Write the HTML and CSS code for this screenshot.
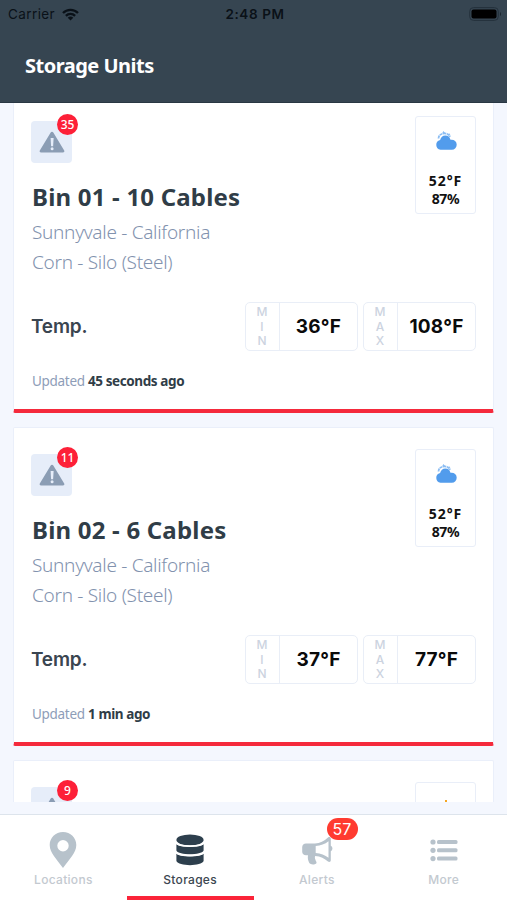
FILE: index.html
```
<!doctype html>
<html lang="en">
<head>
	<meta charset="utf-8">
	<meta name="viewport" content="width=device-width, initial-scale=1.0">
	<title>Storage Units</title>
	<link rel="stylesheet" href="styles.css">
</head>

<body>
	<svg class="sprite" width="0" height="0">
		<symbol id="warning" viewBox="0 0 26 22">
			<path fill="#8b9db4" d="M13 .8c.6 0 1 .3 1.300.8l10.900 18c.6 1-.1 1.900-1.200 1.900H2c-1.100 0-1.800-.9-1.200-1.900l10.900-18c.3-.5.7-.8 1.300-.8z"/>
			<path fill="#e6edf9" d="M11.600 7h3l-.5 8.200h-2z"/>
			<circle fill="#e6edf9" cx="13.100" cy="17.700" r="1.500"/>
		</symbol>
		<symbol id="cloud" viewBox="0 0 22 20">
			<path fill="none" stroke="#8bbdf3" stroke-width="1.800" stroke-dasharray="3 .6" d="M3.500 7.500C3.700 4.500 5.500 3 8.500 2.500s5 .8 6.500 3.500"/>
			<path fill="#8bbdf3" d="M8.300 0l1.800 2-3 .6zM14 2l1.700 2.500-2.500-.2z"/>
			<path fill="#529cec" d="M5.500 18.800a5 5 0 0 1-.4-9.800c.7-2.700 2.500-4.500 5.200-4.500s4.500 1.600 5.200 4.200h1a5 5 0 0 1 .3 10.100z"/>
		</symbol>
	</svg>

	<div class="phone">
		<div class="header">
			<div class="statusbar">
				<div class="carrier">Carrier
					<svg width="17" height="13" viewBox="0 0 17 13">
						<g fill="none" stroke="#0a1118" stroke-width="2.300">
							<path d="M1 5C5 .7 12 .7 16 5"/>
							<path d="M3.900 7.900C6.500 5.200 10.500 5.200 13.100 7.900"/>
						</g>
						<path fill="#0a1118" d="M5.700 9.700c1.600-1.500 4-1.500 5.600 0L8.500 12.500z"/>
					</svg>
				</div>
				<div class="clock">2:48 PM</div>
				<div class="battery">
					<svg width="33" height="14" viewBox="0 0 33 14">
						<rect x=".7" y=".6" width="28.600" height="12.800" rx="3.800" fill="none" stroke="#24313c"/>
						<rect x="2.500" y="2.500" width="25" height="9" rx="2" fill="#000"/>
						<path fill="#1a242d" d="M31 5c1.300.8 1.300 3.200 0 4z"/>
					</svg>
				</div>
			</div>
			<h1>Storage Units</h1>
		</div>

		<div class="content">
			<div class="card">
				<div class="card-top">
					<div class="alert">
						<svg width="26" height="22"><use href="#warning"/></svg>
						<span class="count">35</span>
					</div>
					<div class="weather">
						<svg width="22" height="20"><use href="#cloud"/></svg>
						<p class="degrees">52°F</p>
						<p>87%</p>
					</div>
				</div>
				<h2>Bin 01 - 10 Cables</h2>
				<p class="info place">Sunnyvale - California</p>
				<p class="info">Corn - Silo (Steel)</p>
				<div class="temp">
					<h3>Temp.</h3>
					<div class="range">
						<div class="label"><span>M</span><span>I</span><span>N</span></div>
						<div class="value">36°F</div>
					</div>
					<div class="range">
						<div class="label"><span>M</span><span>A</span><span>X</span></div>
						<div class="value">108°F</div>
					</div>
				</div>
				<p class="updated">Updated <b>45 seconds ago</b></p>
			</div>

			<div class="card">
				<div class="card-top">
					<div class="alert">
						<svg width="26" height="22"><use href="#warning"/></svg>
						<span class="count">11</span>
					</div>
					<div class="weather">
						<svg width="22" height="20"><use href="#cloud"/></svg>
						<p class="degrees">52°F</p>
						<p>87%</p>
					</div>
				</div>
				<h2>Bin 02 - 6 Cables</h2>
				<p class="info place">Sunnyvale - California</p>
				<p class="info">Corn - Silo (Steel)</p>
				<div class="temp">
					<h3>Temp.</h3>
					<div class="range">
						<div class="label"><span>M</span><span>I</span><span>N</span></div>
						<div class="value">37°F</div>
					</div>
					<div class="range">
						<div class="label"><span>M</span><span>A</span><span>X</span></div>
						<div class="value">77°F</div>
					</div>
				</div>
				<p class="updated">Updated <b>1 min ago</b></p>
			</div>

			<div class="card">
				<div class="card-top">
					<div class="alert">
						<svg width="26" height="22"><use href="#warning"/></svg>
						<span class="count">9</span>
					</div>
					<div class="weather">
						<svg width="22" height="20" viewBox="0 0 22 20">
							<path stroke="#f5a623" stroke-width="2" d="M11 3v3"/>
							<circle cx="11" cy="12" r="4" fill="#f5a623"/>
						</svg>
					</div>
				</div>
			</div>
		</div>

		<div class="tabs">
			<div class="tab">
				<svg width="28" height="38" viewBox="0 0 28 38">
					<path fill="#b7c2cb" fill-rule="evenodd" d="M14 1C6.500 1 .7 6.800.7 14c0 8 7.300 14.500 13.300 23 6-8.500 13.300-15 13.300-23C27.300 6.800 21.500 1 14 1zm0 8a5.700 5.700 0 1 1 0 11.400A5.700 5.700 0 0 1 14 9z"/>
				</svg>
				<span>Locations</span>
			</div>
			<div class="tab active">
				<svg width="28" height="38" viewBox="0 0 28 38">
					<g fill="#2d3f4d">
						<ellipse cx="14" cy="9" rx="13.600" ry="5.500"/>
						<path d="M.4 13c3 3.700 24.200 3.700 27.200 0v6.500c-2 5-25.200 5-27.200 0z"/>
						<path d="M.4 22.500c3 3.700 24.200 3.700 27.200 0V30c-2 5.500-25.200 5.500-27.200 0z"/>
					</g>
					<path fill="none" stroke="#fff" stroke-width="1.700" d="M0 11.800c3 4.500 25 4.500 28 0M0 21.200c3 4.500 25 4.500 28 0"/>
				</svg>
				<span>Storages</span>
			</div>
			<div class="tab">
				<svg width="32" height="38" viewBox="0 0 32 38">
					<path fill="#b7c2cb" fill-rule="evenodd" d="M5 12.500h9c5 0 9-2.500 13-6 1.300-1 2.800-.3 2.800 1.300v7c2.200 1.200 2.200 4.200 0 5.400v9c0 1.600-1.600 2.200-2.800 1.200-3.500-3-7.500-5.200-12.800-5.500-.8 2 .1 3 .4 4.300.2 1 1.200 1.500.9 2.700-.7 1.900-6 2-7.200.2C7 29.500 6.500 27 7 24.300H5c-2.200 0-3.800-1.600-3.800-3.600v-4.500c0-2.100 1.600-3.700 3.800-3.700zm22.500-2.200c-3.600 2.900-7.800 4.500-12.800 4.700v6.900c5 .3 9.300 2 12.800 4.800z"/>
				</svg>
				<span class="badge">57</span>
				<span>Alerts</span>
			</div>
			<div class="tab">
				<svg width="28" height="38" viewBox="0 0 28 38">
					<g fill="#b7c2cb">
						<circle cx="3" cy="11" r="2.600"/>
						<circle cx="3" cy="19.300" r="2.600"/>
						<circle cx="3" cy="27.600" r="2.600"/>
						<rect x="7" y="9" width="20.500" height="4" rx="1.500"/>
						<rect x="7" y="17.300" width="20.500" height="4" rx="1.500"/>
						<rect x="7" y="25.600" width="20.500" height="4" rx="1.500"/>
					</g>
				</svg>
				<span>More</span>
			</div>
		</div>
	</div>
</body>
</html>
```
FILE: styles.css
```
* {
	box-sizing: border-box;
}
body {
	margin: 0;
	font-family: "Noto Sans", "Open Sans", sans-serif;
	background: #f4f7fe;
}
h1, h2, h3, p {
	margin: 0;
	white-space: nowrap;
}
svg {
	display: block;
}
.sprite {
	position: absolute;
}
.phone {
	display: flex;
	flex-direction: column;
	height: 900px;
	overflow: hidden;
}

/* Header */
.header {
	flex: none;
	height: 103px;
	background: #364551;
	border-bottom: 1px solid #293743;
}
.statusbar {
	display: grid;
	grid-template-columns: 1fr auto 1fr;
	align-items: center;
	height: 28px;
	padding: 0 5px 0 8px;
	font: 13.5px/28px Inter, sans-serif;
	color: #0a1118;
}
.carrier {
	display: flex;
	align-items: center;
	gap: 7px;
	letter-spacing: .4px;
}
.clock {
	font-weight: 600;
	letter-spacing: .6px;
}
.battery {
	justify-self: end;
}
.header h1 {
	padding-left: 25px;
	font-size: 20px;
	line-height: 75px;
	letter-spacing: -.5px;
	color: #fff;
}

/* Cards */
.content {
	flex: none;
	height: 699px;
	padding: 0 13px;
	overflow: hidden;
}
.card {
	height: 319px;
	margin-bottom: 14px;
	padding: 0 17px;
	background: #fff;
	border: 1px solid #eaeffa;
	border-bottom: 4px solid #f52a3c;
	border-radius: 2px;
}
.card:first-child {
	margin-top: -9px;
}
.card-top {
	display: flex;
	justify-content: space-between;
	height: 84px;
}
.alert {
	position: relative;
	display: flex;
	align-items: center;
	justify-content: center;
	width: 41px;
	height: 42px;
	margin-top: 26px;
	background: #e6edf9;
	border-radius: 4px;
}
.count {
	position: absolute;
	top: -7px;
	right: -6px;
	width: 21px;
	height: 21px;
	border-radius: 50%;
	background: #fd2038;
	color: #fff;
	font: 500 12px/22px "Noto Sans", sans-serif;
	text-align: center;
}
.weather {
	display: flex;
	flex-direction: column;
	align-items: center;
	width: 61px;
	height: 98px;
	margin-top: 21px;
	padding-top: 14px;
	border: 1px solid #e9eef8;
	border-radius: 3px;
	font-size: 14px;
	font-weight: bold;
	line-height: 18px;
	letter-spacing: -.4px;
	color: #111;
}
.weather svg {
	flex: none;
	margin-bottom: 21px;
}
.weather .degrees {
	letter-spacing: 1px;
}
.card h2 {
	padding-left: 1px;
	font-size: 24px;
	line-height: 36px;
	letter-spacing: .2px;
	color: #303d47;
}
.info {
	padding-left: 1px;
	font-size: 19px;
	font-weight: 300;
	line-height: 30px;
	letter-spacing: -.3px;
	color: #8292ae;
}
.place {
	padding-top: 2px;
}
.temp {
	display: flex;
	align-items: center;
	height: 49px;
	margin-top: 25px;
}
.temp h3 {
	flex: 1;
	font: 600 19px/49px Inter, sans-serif;
	letter-spacing: -.2px;
	color: #3a4550;
}
.range {
	display: flex;
	width: 113px;
	height: 49px;
	margin-left: 5px;
	border: 1px solid #e9eef7;
	border-radius: 5px;
}
.label {
	display: flex;
	flex-direction: column;
	width: 34px;
	padding: 2px 1px 0 0;
	border-right: 1px solid #e9eef7;
	font: 500 12px/14.500px Inter, sans-serif;
	text-align: center;
	color: #ccd3e0;
}
.value {
	flex: 1;
	font: bold 19px/47px Inter, sans-serif;
	letter-spacing: .2px;
	text-align: center;
	color: #0a0a0a;
}
.updated {
	margin-top: 17px;
	padding-left: 1px;
	font-size: 13.5px;
	line-height: 26px;
	letter-spacing: -.3px;
	color: #8e9db8;
}
.updated b {
	letter-spacing: -.4px;
	color: #303d47;
}

/* Bottom tabs */
.tabs {
	display: flex;
	flex: none;
	height: 86px;
	margin-top: 12px;
	background: #fff;
	border-top: 1px solid #dde4ec;
}
.tab {
	position: relative;
	display: flex;
	flex: 1;
	flex-direction: column;
	align-items: center;
	padding-top: 16px;
	font: 500 12px/22px Inter, sans-serif;
	letter-spacing: .3px;
	color: #c3c9d0;
}
.active {
	border-bottom: 4px solid #fb2439;
	color: #3b4650;
}
.badge {
	position: absolute;
	top: 3px;
	left: 73px;
	width: 31px;
	height: 22px;
	border-radius: 11px;
	background: #ff3b30;
	color: #fff;
	font-size: 16px;
	font-weight: 400;
	letter-spacing: 0;
	text-align: center;
}
```
